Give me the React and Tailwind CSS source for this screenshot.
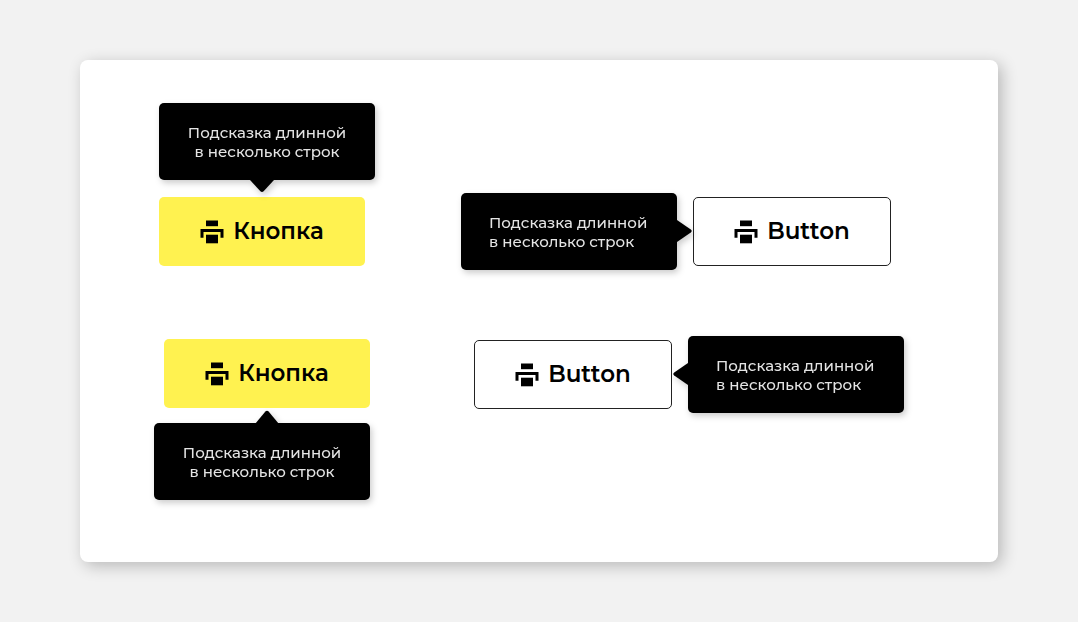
import React from "react";
import clsx from "clsx";

function PrinterIcon() {
  return (
    <svg viewBox="0 0 24 24" className="size-6 shrink-0" fill="currentColor" aria-hidden="true">
      <path d="M6 0.5h12v5.7H6z" />
      <path d="M0.5 9h23v8.8h-3v-5.8h-17v5.8h-3z" />
      <path d="M6 14.7h12v8.6H6z" />
    </svg>
  );
}

const arrows = {
  bottom: { box: "top-full left-[91px] h-3 w-6", viewBox: "0 0 24 12", d: "M0 -1H24V0L13.6 11.2Q12 12.6 10.4 11.2L0 0Z" },
  top: { box: "bottom-full left-[101px] -mb-px h-[14px] w-6", viewBox: "0 0 24 14", d: "M0 14L10.4 1.4Q12 0 13.6 1.4L24 14Z" },
  right: { box: "left-full top-[27px] h-[22px] w-[15px]", viewBox: "0 0 15 22", d: "M-1 0H0L13.8 9.4Q15.6 11 13.8 12.6L0 22H-1Z" },
  left: { box: "right-full top-[27px] h-[22px] w-[15px]", viewBox: "0 0 15 22", d: "M16 0H15L1.2 9.4Q-0.6 11 1.2 12.6L15 22H16Z" },
};

function Tooltip({ id, arrow, centered }) {
  const { box, viewBox, d } = arrows[arrow];
  return (
    <div
      id={id}
      role="tooltip"
      className={clsx(
        "relative w-[216px] rounded-[5px] bg-black px-7 pt-5 pb-[19px] text-[15px] leading-[19px] font-medium whitespace-nowrap text-[#e4e4e4] drop-shadow-[2px_3px_3px_rgba(0,0,0,0.2)]",
        centered && "text-center"
      )}
    >
      Подсказка длинной
      <br />в несколько строк
      <svg viewBox={viewBox} className={clsx("absolute text-black", box)} fill="currentColor" aria-hidden="true">
        <path d={d} />
      </svg>
    </div>
  );
}

function Button({ children, tip, outlined }) {
  return (
    <button
      type="button"
      aria-describedby={tip}
      className={clsx(
        "flex h-[69px] items-center justify-center gap-[9px] rounded-[5px] text-[23px] font-semibold text-black",
        outlined ? "w-[198px] border border-[#222222] bg-white" : "w-[206px] bg-[#fff250]"
      )}
    >
      <PrinterIcon />
      {children}
    </button>
  );
}

export default function App() {
  return (
    <main className="min-h-screen bg-[#f2f2f2] px-20 py-[60px] font-['Montserrat','Inter','Noto_Sans',sans-serif]">
      <section className="grid grid-cols-[auto_auto] justify-start gap-x-[86px] gap-y-[66px] rounded-lg bg-white px-[74px] pt-[43px] pb-[62px] shadow-[4px_4px_16px_rgba(0,0,0,0.24)]">
        <div className="flex flex-col items-start gap-[17px] pb-1 pl-[5px]">
          <Tooltip id="tip-above" arrow="bottom" centered />
          <Button tip="tip-above">Кнопка</Button>
        </div>
        <div className="flex items-center gap-4 self-end">
          <Tooltip id="tip-before" arrow="right" />
          <Button tip="tip-before" outlined>Button</Button>
        </div>
        <div className="flex w-[216px] flex-col items-end gap-[15px] pt-[3px]">
          <Button tip="tip-below">Кнопка</Button>
          <Tooltip id="tip-below" arrow="top" centered />
        </div>
        <div className="flex items-center gap-4 self-start pl-[13px]">
          <Button tip="tip-after" outlined>Button</Button>
          <Tooltip id="tip-after" arrow="left" />
        </div>
      </section>
    </main>
  );
}
